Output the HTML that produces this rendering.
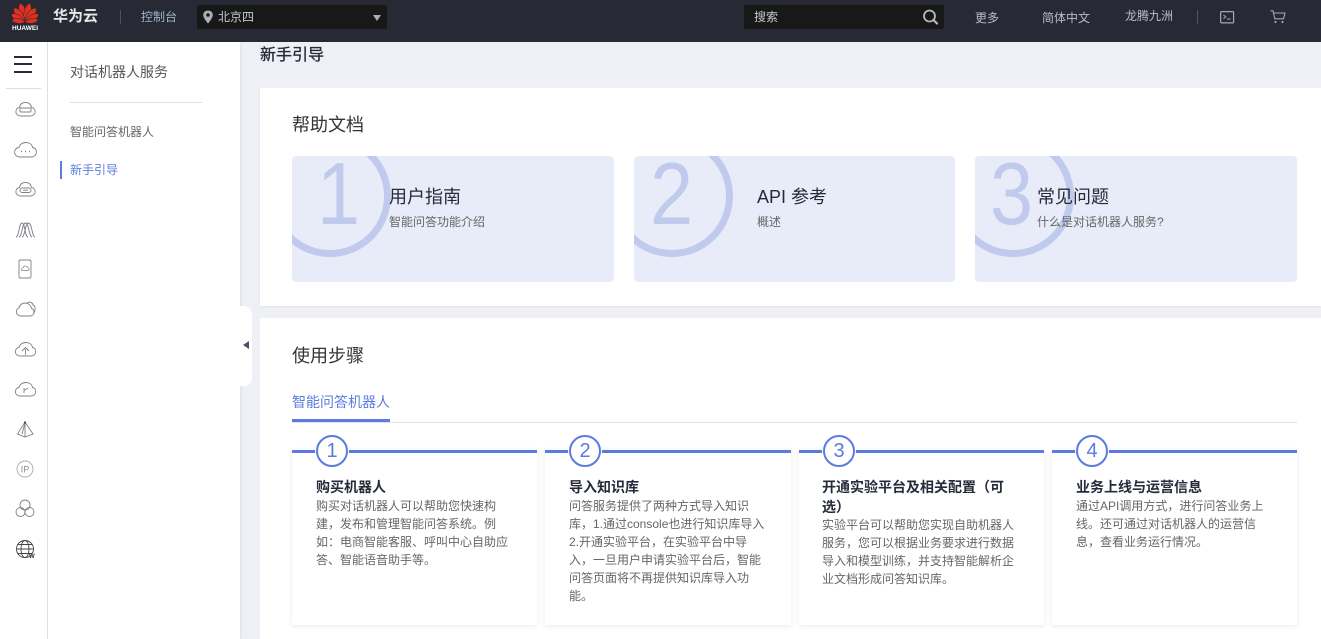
<!DOCTYPE html>
<html lang="zh"><head><meta charset="utf-8"><title>新手引导</title>
<style>
*{box-sizing:border-box}
html,body{margin:0;padding:0}
body{width:1321px;height:639px;overflow:hidden;position:relative;background:#eef0f5;font-family:"Liberation Sans","Noto Sans CJK SC",sans-serif;color:#666;font-size:12px}
.a{position:absolute;white-space:nowrap}
.hd{position:absolute;left:0;top:0;width:1321px;height:42px;background:#272a35}
.dark{position:absolute;top:5px;height:24px;background:#181818;border-radius:2px}
.t{line-height:18px;color:#b8bcc6}
.doc{position:absolute;top:156px;height:126px;background:#e8ecf9;border-radius:4px;overflow:hidden}
.ring{position:absolute;left:-23px;top:-21px;width:122px;height:122px;border:7px solid #bfcaec;border-radius:50%}
.num{position:absolute;top:-12px;left:20px;font-size:88px;line-height:100px;color:#bfcaec;transform:scaleX(.88);transform-origin:0 50%}
.dt{position:absolute;top:29px;font-size:18px;line-height:24px;color:#252b3a}
.ds{position:absolute;top:57px;font-size:12px;line-height:18px;color:#666}
.step{position:absolute;top:450px;height:175px;background:#fff;border-top:3px solid #5a7be0;box-shadow:0 1px 5px rgba(0,0,0,.09)}
.c{position:absolute;top:-18px;left:24px;width:32px;height:32px;border:2px solid #5a7be0;border-radius:50%;background:#fff;box-shadow:0 0 0 1px #fff;color:#5a7be0;font-size:20px;line-height:28px;text-align:center}
.st{position:absolute;left:24px;top:24px;font-size:14px;line-height:20px;font-weight:700;color:#252b3a;white-space:nowrap}
.sb{position:absolute;left:24px;font-size:12px;line-height:18px;color:#666;white-space:nowrap}
</style></head><body>

<div class="hd"></div>
<svg class="a" style="left:10px;top:1px" width="30" height="24" viewBox="0 0 30 24">
<g fill="#e0301e" stroke="#272a35" stroke-width=".5" transform="translate(15 21)">
<path d="M0 0C-4-5-4.500-14-1-18.500C0-19 .5-19 1-18.500C4.500-14 4-5 0 0Z" transform="rotate(-14)"/>
<path d="M0 0C-4-5-4.500-14-1-18.500C0-19 .5-19 1-18.500C4.500-14 4-5 0 0Z" transform="rotate(14)"/>
<path d="M0 0C-4-5-4.500-13-1-17C0-17.500 .5-17.500 1-17C4.500-13 4-5 0 0Z" transform="rotate(-38)"/>
<path d="M0 0C-4-5-4.500-13-1-17C0-17.500 .5-17.500 1-17C4.500-13 4-5 0 0Z" transform="rotate(38)"/>
<path d="M0 0C-3.500-4-4-11-1-15C0-15.500 .5-15.500 1-15C4-11 3.500-4 0 0Z" transform="rotate(-60)"/>
<path d="M0 0C-3.500-4-4-11-1-15C0-15.500 .5-15.500 1-15C4-11 3.500-4 0 0Z" transform="rotate(60)"/>
<path d="M0 0C-3-4-3-9-1-12.500C0-13 .5-13 1-12.500C3-9 3-4 0 0Z" transform="rotate(-82)"/>
<path d="M0 0C-3-4-3-9-1-12.500C0-13 .5-13 1-12.500C3-9 3-4 0 0Z" transform="rotate(82)"/>
</g></svg>
<div class="a" style="left:11px;top:24px;width:28px;text-align:center;font-size:6.500px;line-height:10px;color:#fff;font-weight:700">HUAWEI</div>
<div class="a" style="left:53px;top:7px;font-size:15px;line-height:20px;font-weight:700;color:#e8e8ea">华为云</div>
<div class="a" style="left:120px;top:10px;width:1px;height:14px;background:#4c505c"></div>
<div class="a t" style="left:141px;top:8px;color:#a3b3c6">控制台</div>
<div class="dark" style="left:197px;width:190px"></div>
<svg class="a" style="left:202px;top:10px" width="12" height="14" viewBox="0 0 12 14"><path d="M6 0.500C3 0.500 1.200 2.600 1.200 5C1.200 8 6 13.500 6 13.500C6 13.500 10.800 8 10.800 5C10.800 2.600 9 .5 6 .5Z" fill="#a9b0bb"/><circle cx="6" cy="5" r="1.800" fill="#181818"/></svg>
<div class="a t" style="left:218px;top:8px;color:#c4c8d0">北京四</div>
<div class="a" style="left:373px;top:15px;width:0;height:0;border-left:4px solid transparent;border-right:4px solid transparent;border-top:6px solid #a9afb9"></div>
<div class="dark" style="left:744px;width:200px"></div>
<div class="a t" style="left:754px;top:8px;color:#c4c8d0">搜索</div>
<svg class="a" style="left:922px;top:9px" width="17" height="16" viewBox="0 0 17 16"><circle cx="7.500" cy="7" r="5.500" fill="none" stroke="#b4b8c0" stroke-width="1.800"/><path d="M11.500 11L15 14.500" stroke="#b4b8c0" stroke-width="2.200" stroke-linecap="round"/></svg>
<div class="a t" style="left:975px;top:9px">更多</div>
<div class="a t" style="left:1042px;top:9px">简体中文</div>
<div class="a t" style="left:1125px;top:7px">龙腾九洲</div>
<div class="a" style="left:1197px;top:10px;width:1px;height:14px;background:#53565f"></div>
<svg class="a" style="left:1220px;top:11px" width="15" height="13" viewBox="0 0 15 13"><rect x=".6" y=".6" width="13" height="11.300" rx="1" fill="none" stroke="#a4a8b0" stroke-width="1.200"/><path d="M3.500 4L5.800 5.800L3.500 7.600M7 8H10.500" fill="none" stroke="#a4a8b0"/></svg>
<svg class="a" style="left:1270px;top:10px" width="16" height="14" viewBox="0 0 16 14"><path d="M.5 .8H3L4.800 8.800H13.500L15 3H3.500" fill="none" stroke="#a4a8b0" stroke-width="1.100"/><circle cx="5.500" cy="12" r="1.100" fill="#a4a8b0"/><circle cx="12.500" cy="12" r="1.100" fill="#a4a8b0"/></svg>

<div class="a" style="left:0;top:42px;width:47px;height:597px;background:#fff"></div>
<div class="a" style="left:47px;top:42px;width:1px;height:597px;background:#e2e2e4"></div>
<div class="a" style="left:48px;top:42px;width:192px;height:597px;background:#fff;box-shadow:1px 0 3px rgba(0,0,0,.07)"></div>
<div class="a" style="left:14px;top:56px;width:18px;height:2px;background:#252b3a"></div>
<div class="a" style="left:14px;top:63px;width:18px;height:2px;background:#252b3a"></div>
<div class="a" style="left:14px;top:71px;width:18px;height:2px;background:#252b3a"></div>
<div class="a" style="left:6px;top:88px;width:35px;height:1px;background:#ddd"></div>

<svg class="a" style="left:0;top:90px" width="47" height="480" viewBox="0 90 47 480" fill="none" stroke="#7c8088" stroke-width=".9">
<path d="M20.500 116H30.500C36.500 116 36.500 108 31.500 107.500C31 104 28.500 102.500 25.500 102.500C22.500 102.500 20 104 19.500 107.500C14.500 108 14.500 116 20.500 116Z"/><rect x="20" y="108" width="11" height="4" rx="1"/>
<path d="M20 157H31C38 157 38 148 32.500 147.500C32 144 29 142.500 26 142.500C22.500 142.500 19.500 144.500 19 147.500C13 148 13 157 20 157Z"/><path d="M21 151.500h1M25 151.500h1M29 151.500h1" stroke-width="1.400"/>
<path d="M20.500 196H30.500C36.500 196 36.500 188 31.500 187.500C31 184 28.500 182.500 25.500 182.500C22.500 182.500 20 184 19.500 187.500C14.500 188 14.500 196 20.500 196Z"/><rect x="20" y="188" width="11" height="4.500" rx="2.200"/><path d="M23 190.200h5"/>
<path d="M16 237C19 237 19 223 22 223C25 223 25 237 28 237M19 237C22 237 22 223 25.500 223C29 223 29 237 32 237M22 237C25 237 25 223 28.500 223C32 223 32 237 35 237"/>
<rect x="19" y="260" width="12" height="18" rx="1.500"/><path d="M22 270.500H28C29.500 270.500 29.500 268 28 267.800C27.500 265.500 23.500 265.500 23 267.800C21.500 268 21 270.500 22 270.500Z" stroke-width=".7"/>
<path d="M21 316H30C35 316 35 309 31.500 308.500C31 305 28 303 25 303C22 303 19.500 305 19 308C15 309 15.500 316 21 316Z M27 303C30 301 32.500 302.500 33 305C36 305.500 35.500 312 33 314"/>
<path d="M20 356H31C37 356 37 348 32.500 347.500C32 344 29 342.500 26 342.500C22.500 342.500 19.500 344.500 19 347.500C14 348 14 356 20 356Z"/><path d="M25.500 355V349M22 351L25.500 347.500L29 351"/>
<path d="M20 396H31C37 396 37 388 32.500 387.500C32 384 29 382.500 26 382.500C22.500 382.500 19.500 384.500 19 387.500C14 388 14 396 20 396Z"/><path d="M28 388L24 390.500M24 388V393"/>
<path d="M25 422L17.500 434L25 437L33 434ZM25 422V437M25 423L22 434"/><circle cx="25" cy="422.500" r="1" fill="#333" stroke="none"/>
<circle cx="25" cy="469" r="8" stroke="#a6aab2"/><text x="25" y="472.500" font-size="9" fill="#8a8e96" stroke="none" text-anchor="middle" font-family="Liberation Sans">IP</text>
<circle cx="25" cy="505" r="5"/><circle cx="20.500" cy="512" r="4.500"/><circle cx="29.500" cy="512" r="4.500"/>
<g stroke="#444"><circle cx="25" cy="549" r="8.500"/><ellipse cx="25" cy="549" rx="4" ry="8.500"/><path d="M16.500 549H33.500M18 544.500H32M18 553.500H32"/></g>
<text x="29" y="558" font-size="6" font-weight="700" fill="#333" stroke="none" font-family="Liberation Sans">W</text>
</svg>

<div class="a" style="left:70px;top:62px;font-size:14px;line-height:20px;color:#555">对话机器人服务</div>
<div class="a" style="left:70px;top:102px;width:132px;height:1px;background:#ddd"></div>
<div class="a" style="left:70px;top:123px;line-height:18px;color:#666">智能问答机器人</div>
<div class="a" style="left:60px;top:161px;width:2px;height:18px;background:#5a7be0"></div>
<div class="a" style="left:70px;top:161px;line-height:18px;color:#5a7be0">新手引导</div>

<div class="a" style="left:240px;top:306px;width:12px;height:80px;background:#fff;border-radius:0 8px 8px 0"></div>
<div class="a" style="left:243px;top:341px;width:0;height:0;border-top:4.500px solid transparent;border-bottom:4.500px solid transparent;border-right:6px solid #4a5068"></div>

<div class="a" style="left:260px;top:46px;font-size:16px;line-height:20px;color:#252b3a;-webkit-text-stroke:.3px #252b3a">新手引导</div>

<div class="a" style="left:260px;top:88px;width:1061px;height:218px;background:#fff;box-shadow:0 1px 2px rgba(0,0,0,.05)"></div>
<div class="a" style="left:292px;top:113px;font-size:18px;line-height:24px;color:#333">帮助文档</div>

<div class="doc" style="left:292px;width:322px"><div class="ring"></div><div class="num" style="left:25px">1</div><div class="dt" style="left:97px">用户指南</div><div class="ds" style="left:97px">智能问答功能介绍</div></div>
<div class="doc" style="left:634px;width:321px"><div class="ring"></div><div class="num" style="left:16px">2</div><div class="dt" style="left:123px">API 参考</div><div class="ds" style="left:123px">概述</div></div>
<div class="doc" style="left:975px;width:322px"><div class="ring"></div><div class="num" style="left:15px">3</div><div class="dt" style="left:62px">常见问题</div><div class="ds" style="left:62px">什么是对话机器人服务?</div></div>

<div class="a" style="left:260px;top:318px;width:1061px;height:321px;background:#fff"></div>
<div class="a" style="left:292px;top:344px;font-size:18px;line-height:24px;color:#333">使用步骤</div>
<div class="a" style="left:292px;top:392px;font-size:14px;line-height:20px;color:#5a7be0">智能问答机器人</div>
<div class="a" style="left:292px;top:422px;width:1005px;height:1px;background:#dfe1e8"></div>
<div class="a" style="left:292px;top:419px;width:98px;height:3px;background:#5a7be0"></div>

<div class="step" style="left:292px;width:245px"><div class="c">1</div><div class="st">购买机器人</div><div class="sb" style="top:44px">购买对话机器人可以帮助您快速构<br>建，发布和管理智能问答系统。例<br>如：电商智能客服、呼叫中心自助应<br>答、智能语音助手等。</div></div>
<div class="step" style="left:545px;width:246px"><div class="c">2</div><div class="st">导入知识库</div><div class="sb" style="top:44px">问答服务提供了两种方式导入知识<br>库，1.通过console也进行知识库导入<br>2.开通实验平台，在实验平台中导<br>入，一旦用户申请实验平台后，智能<br>问答页面将不再提供知识库导入功<br>能。</div></div>
<div class="step" style="left:799px;width:245px"><div class="c">3</div><div class="st" style="left:23px">开通实验平台及相关配置（可<br>选）</div><div class="sb" style="top:63px;left:23px">实验平台可以帮助您实现自助机器人<br>服务，您可以根据业务要求进行数据<br>导入和模型训练，并支持智能解析企<br>业文档形成问答知识库。</div></div>
<div class="step" style="left:1052px;width:245px"><div class="c">4</div><div class="st">业务上线与运营信息</div><div class="sb" style="top:44px">通过API调用方式，进行问答业务上<br>线。还可通过对话机器人的运营信<br>息，查看业务运行情况。</div></div>

</body></html>
